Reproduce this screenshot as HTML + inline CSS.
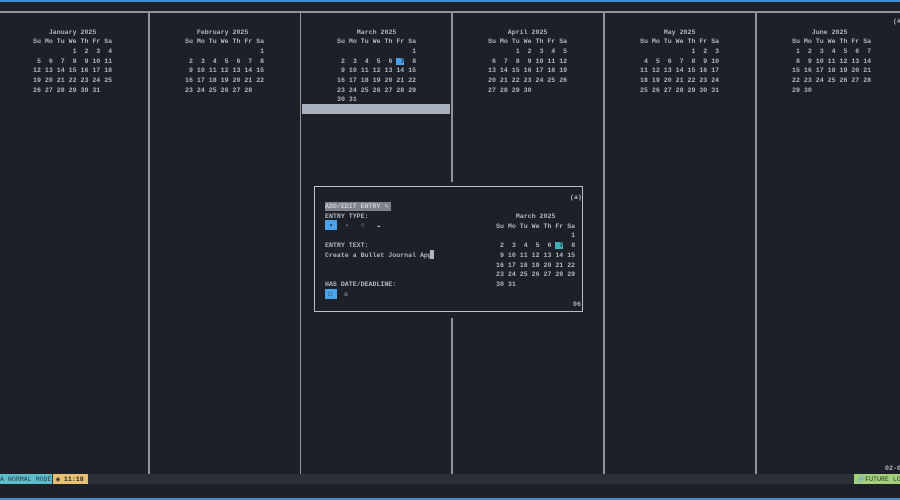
<!DOCTYPE html>
<html><head><meta charset="utf-8"><style>
html,body{margin:0;padding:0}
body{width:900px;height:500px;background:#1e2027;position:relative;overflow:hidden;font-family:"Liberation Mono","DejaVu Sans Mono",monospace;color:#aeb6c4}
.a{position:absolute}
pre{position:absolute;margin:0;font-family:"Liberation Mono","DejaVu Sans Mono",monospace;font-size:6.6px;line-height:9.7px;color:#aeb6c4;font-weight:bold;white-space:pre}
.v{position:absolute;width:1.5px;background:#8e939c}
.hl{background:#4aa3e8;color:#1e2027}
.tl{background:#3fb0b8;color:#1e2027}
</style></head><body>
<div class="a" style="left:0;top:0;width:900px;height:1.5px;background:#3d8fd6"></div>
<div class="a" style="left:0;top:11px;width:900px;height:1.5px;background:#8e939c"></div>
<div class="v" style="left:148px;top:12px;height:462px"></div>
<div class="v" style="left:299.5px;top:12px;height:462px"></div>
<div class="v" style="left:451px;top:12px;height:170px"></div>
<div class="v" style="left:451px;top:318px;height:156px"></div>
<div class="v" style="left:603px;top:12px;height:462px"></div>
<div class="v" style="left:755px;top:12px;height:462px"></div>

<pre style="left:33px;top:27.5px">    January 2025
Su Mo Tu We Th Fr Sa
          1  2  3  4
 5  6  7  8  9 10 11
12 13 14 15 16 17 18
19 20 21 22 23 24 25
26 27 28 29 30 31</pre>
<pre style="left:185px;top:27.5px">   February 2025
Su Mo Tu We Th Fr Sa
                   1
 2  3  4  5  6  7  8
 9 10 11 12 13 14 15
16 17 18 19 20 21 22
23 24 25 26 27 28</pre>
<pre style="left:337px;top:27.5px">     March 2025
Su Mo Tu We Th Fr Sa
                   1
 2  3  4  5  6 <span class="hl"> 7</span>  8
 9 10 11 12 13 14 15
16 17 18 19 20 21 22
23 24 25 26 27 28 29
30 31</pre>
<div class="a" style="left:302px;top:104px;width:148px;height:9.5px;background:#a9b1bf"></div>
<pre style="left:488px;top:27.5px">     April 2025
Su Mo Tu We Th Fr Sa
       1  2  3  4  5
 6  7  8  9 10 11 12
13 14 15 16 17 18 19
20 21 22 23 24 25 26
27 28 29 30</pre>
<pre style="left:640px;top:27.5px">      May 2025
Su Mo Tu We Th Fr Sa
             1  2  3
 4  5  6  7  8  9 10
11 12 13 14 15 16 17
18 19 20 21 22 23 24
25 26 27 28 29 30 31</pre>
<pre style="left:792px;top:27.5px">     June 2025
Su Mo Tu We Th Fr Sa
 1  2  3  4  5  6  7
 8  9 10 11 12 13 14
15 16 17 18 19 20 21
22 23 24 25 26 27 28
29 30</pre>
<pre style="left:893px;top:17px">(#</pre>

<div class="a" style="left:314px;top:186px;width:267px;height:124px;border:1.5px solid #b9bec8;background:#1e2027"></div>
<pre style="left:570px;top:193px">(a)</pre>
<div class="a" style="left:325px;top:201.5px;width:66px;height:9px;background:#7d838d"></div>
<pre style="left:325px;top:202px;color:#c8ced8">ADD/EDIT ENTRY ✎</pre>
<pre style="left:325px;top:212px">ENTRY TYPE:</pre>
<div class="a" style="left:325px;top:220px;width:12px;height:9.5px;background:#4aa3e8"></div>
<pre style="left:329px;top:220.5px;color:#1e2027">•</pre>
<pre style="left:345px;top:220.5px">-   ○   ☁</pre>
<pre style="left:325px;top:241px">ENTRY TEXT:</pre>
<pre style="left:325px;top:251px">Create a Bullet Journal App</pre>
<div class="a" style="left:430px;top:250px;width:3.5px;height:9px;background:#aeb6c4"></div>
<pre style="left:325px;top:280px">HAS DATE/DEADLINE:</pre>
<div class="a" style="left:325px;top:289px;width:12px;height:10px;background:#4aa3e8"></div>
<pre style="left:328px;top:289.5px;color:#1e2027">☐</pre>
<pre style="left:344px;top:289.5px">☒</pre>
<pre style="left:496px;top:212px">     March 2025
Su Mo Tu We Th Fr Sa
                   1
 2  3  4  5  6 <span class="tl"> 7</span>  8
 9 10 11 12 13 14 15
16 17 18 19 20 21 22
23 24 25 26 27 28 29
30 31</pre>
<pre style="left:573px;top:300px">06</pre>

<pre style="left:885px;top:464px">02-0</pre>
<div class="a" style="left:0;top:474px;width:900px;height:10px;background:#2c2f36"></div>
<div class="a" style="left:0;top:474px;width:52px;height:10px;background:#5bbccc"></div>
<pre style="left:0;top:474.5px;color:#2c3a44;font-weight:normal">A NORMAL MODE</pre>
<div class="a" style="left:53px;top:474px;width:35px;height:10px;background:#e8c170"></div>
<pre style="left:56px;top:474.5px;color:#2c2a24">◉ 11:18</pre>
<div class="a" style="left:854px;top:474px;width:46px;height:10px;background:#a3d07a"></div>
<pre style="left:857px;top:474.5px;color:#2c3a24;font-weight:normal">🔗FUTURE LO</pre>
<div class="a" style="left:0;top:498px;width:900px;height:2px;background:#3d8fd6"></div>
</body></html>
